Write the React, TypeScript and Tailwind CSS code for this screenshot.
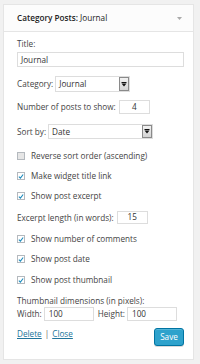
import React from "react";

const F = { fontFamily: '"Open Sans", "Noto Sans", sans-serif' };

function Check({ on }: { on: boolean }) {
  return (
    <span
      className={`w-[8px] h-[8px] shrink-0 border border-[#b4b9be] ${on ? "bg-white" : "bg-[#e6e6e6]"} flex items-center justify-center`}
    >
      {on && (
        <svg width="7" height="7" viewBox="0 0 7 7">
          <path d="M1 3.6 L2.8 5.4 L6 1.2" stroke="#1e8cbe" strokeWidth="1.3" fill="none" />
        </svg>
      )}
    </span>
  );
}

function CheckRow({ on, label, mt }: { on: boolean; label: string; mt: string }) {
  return (
    <div className={`${mt} h-[12px] flex items-center gap-[6px]`}>
      <Check on={on} />
      <span className="leading-[12px]">{label}</span>
    </div>
  );
}

function Select({ w, value }: { w: string; value: string }) {
  return (
    <div className={`${w} h-full border border-[#ddd] bg-white flex items-center justify-between pl-[3px]`}>
      <span className="leading-[12px] text-[#333]">{value}</span>
      <span className="w-[10px] h-full border border-[#8a8a8a] bg-gradient-to-b from-[#f2f2f2] to-[#d4d4d4] flex items-center justify-center">
        <svg width="6" height="5" viewBox="0 0 6 5">
          <rect x="0.5" y="0" width="5" height="1" fill="#111" />
          <path d="M0.5 1.6 H5.5 L3 4.5 Z" fill="#111" />
        </svg>
      </span>
    </div>
  );
}

export default function App() {
  return (
    <div className="w-[200px] h-[364px] bg-[#f1f1f1] pt-[4px] pl-[3px] text-[8.2px] text-[#444]" style={F}>
      <div className="w-[191px] border border-[#e5e5e5] bg-white">
        <div className="h-[27px] bg-[#fcfcfc] border-b border-[#e5e5e5] flex items-center justify-between pl-[13px] pr-[11px]">
          <span className="text-[#222] leading-[12px]">
            <span className="font-semibold">Category Posts:</span> Journal
          </span>
          <svg width="5" height="3" viewBox="0 0 5 3">
            <path d="M0 0 H5 L2.5 3 Z" fill="#aaa" />
          </svg>
        </div>
        <div className="pl-[13px] pr-[9px] pt-[6px] pb-[13px] flex flex-col">
          <div className="h-[11px] leading-[11px]">Title:</div>
          <div className="mt-[3px] h-[15px] border border-[#ddd] flex items-center px-[3px] text-[#333]">
            <span className="leading-[12px]">Journal</span>
          </div>

          <div className="mt-[9px] h-[16px] flex items-center gap-[2px]">
            <span className="leading-[12px]">Category:</span>
            <Select w="w-[75px]" value="Journal" />
          </div>

          <div className="mt-[8px] h-[14px] flex items-center gap-[3px]">
            <span className="leading-[12px]">Number of posts to show:</span>
            <div className="w-[31px] h-full border border-[#ddd] flex items-center justify-center text-[#333]">4</div>
          </div>

          <div className="mt-[10px] h-[15px] flex items-center gap-[2px]">
            <span className="leading-[12px]">Sort by:</span>
            <Select w="w-[105px]" value="Date" />
          </div>

          <CheckRow mt="mt-[11px]" on={false} label="Reverse sort order (ascending)" />
          <CheckRow mt="mt-[8px]" on={true} label="Make widget title link" />
          <CheckRow mt="mt-[8px]" on={true} label="Show post excerpt" />

          <div className="mt-[9px] h-[13px] flex items-center gap-[3px]">
            <span className="leading-[12px]">Excerpt length (in words):</span>
            <div className="w-[31px] h-full border border-[#ddd] flex items-center justify-center text-[#333]">15</div>
          </div>

          <CheckRow mt="mt-[9px]" on={true} label="Show number of comments" />
          <CheckRow mt="mt-[8px]" on={true} label="Show post date" />
          <CheckRow mt="mt-[9px]" on={true} label="Show post thumbnail" />

          <div className="mt-[9px] h-[11px] leading-[11px]">Thumbnail dimensions (in pixels):</div>
          <div className="mt-[1px] h-[14px] flex items-center">
            <span className="leading-[12px]">Width:</span>
            <div className="ml-[2px] w-[50px] h-full border border-[#ddd] flex items-center pl-[4px] text-[#333]">100</div>
            <span className="ml-[4px] leading-[12px]">Height:</span>
            <div className="ml-[2px] w-[50px] h-full border border-[#ddd] flex items-center pl-[4px] text-[#333]">100</div>
          </div>

          <div className="mt-[7px] flex items-start justify-between">
            <div className="leading-[11px] flex items-center gap-[3px]">
              <span className="text-[#21759b] underline">Delete</span>
              <span className="text-[#666]">|</span>
              <span className="text-[#21759b] underline">Close</span>
            </div>
            <button className="w-[30px] h-[18px] bg-[#2ea2cc] border border-[#0074a2] rounded-[3px] text-white shadow-[0_1px_0_rgba(120,200,230,0.5)_inset,0_1px_0_rgba(0,0,0,0.15)] flex items-center justify-center leading-[12px]">
              Save
            </button>
          </div>
        </div>
      </div>
    </div>
  );
}
